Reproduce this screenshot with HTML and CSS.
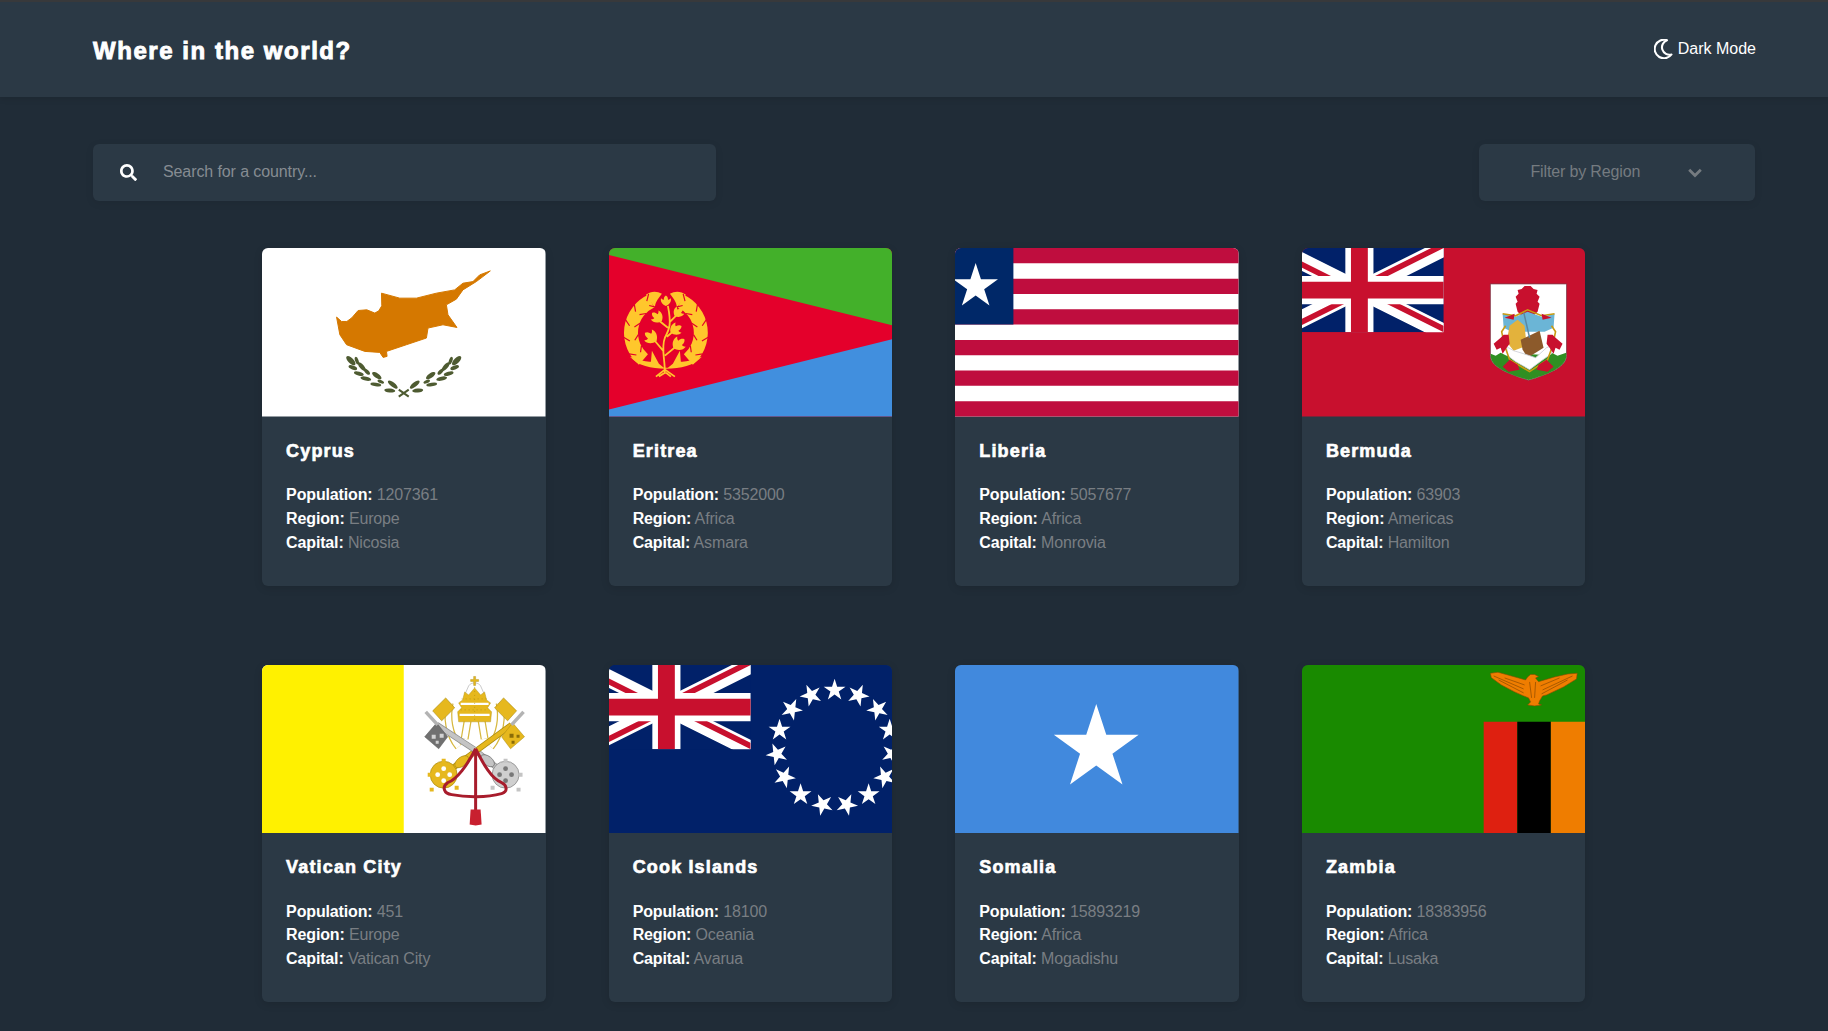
FILE: index.html
```html
<!DOCTYPE html>
<html lang="en">
<head>
  <meta charset="UTF-8" />
  <meta name="viewport" content="width=device-width, initial-scale=1.0"/>
  <title>Where in the world?</title>
  <link rel="stylesheet" href="styles.css">
</head>
<body>
  <svg class="svg-defs" aria-hidden="true">
    <defs>
      <path id="star" d="M0-1 .2245-.309H.951L.363.118.588.809 0 .382-.588.809-.363.118-.951-.309H-.2245Z"/>
      <clipPath id="jack-clip"><path d="M30 15h30v15zv15H0zH0V0zV0h30z"/></clipPath>
      <symbol id="jack" viewBox="0 0 60 30" preserveAspectRatio="none">
        <path d="M0 0h60v30H0z" fill="#012169"/>
        <path d="M0 0 60 30M60 0 0 30" stroke="#fff" stroke-width="6"/>
        <path d="M0 0 60 30M60 0 0 30" stroke="#c8102e" stroke-width="4" clip-path="url(#jack-clip)"/>
        <path d="M30 0v30M0 15h60" stroke="#fff" stroke-width="10"/>
        <path d="M30 0v30M0 15h60" stroke="#c8102e" stroke-width="6"/>
      </symbol>
      <path id="notch" d="M3-7.500-2-2M3 7.500-2 3" fill="none" stroke="#e4002b" stroke-width="1.200"/>
      <path id="bud" d="M0 6C-6 4-8-1-7-5-5-3-4-3-3-3-3-6-2-8 0-9 2-8 3-6 3-3 4-3 5-3 7-5 8-1 6 4 0 6Z"/>
      <g id="wreath-side">
        <path d="M42.200 53.300A35 35 0 0 0 34.500 111.800" fill="none" stroke="#ffc72c" stroke-width="14"/>
        <path d="M37 47C42 43 48 43 53 46 48 52 46 56 46 60Z" fill="#ffc72c"/>
        <use href="#notch" transform="rotate(-28 57 85) translate(57 50)"/>
        <use href="#notch" transform="rotate(-52 57 85) translate(57 50)"/>
        <use href="#notch" transform="rotate(-76 57 85) translate(57 50)"/>
        <use href="#notch" transform="rotate(-100 57 85) translate(57 50)"/>
        <use href="#notch" transform="rotate(-124 57 85) translate(57 50)"/>
      </g>
    </defs>
  </svg>

  <header class="topbar">
    <h1 class="brand">Where in the world?</h1>
    <button class="theme-btn">
      <svg class="moon" viewBox="0 0 19 20"><path fill="none" stroke="#fff" stroke-width="2.100" stroke-linejoin="round" d="M13 1.200A9.300 9.300 0 1 0 17.500 15.500A7.500 7.500 0 0 1 13 1.200Z"/></svg>
      <span>Dark Mode</span>
    </button>
  </header>

  <main class="content">
    <div class="toolbar">
      <label class="search">
        <svg class="search-icon" viewBox="0 0 512 512"><path fill="#fff" d="M505 442.700L405.300 343c-4.500-4.500-10.600-7-17-7H372c27.600-35.300 44-79.700 44-128C416 93.100 322.900 0 208 0S0 93.100 0 208s93.100 208 208 208c48.300 0 92.700-16.400 128-44v16.300c0 6.400 2.500 12.500 7 17l99.700 99.700c9.400 9.400 24.600 9.400 33.900 0l28.300-28.300c9.400-9.400 9.400-24.600.1-34zM208 336c-70.700 0-128-57.200-128-128 0-70.700 57.200-128 128-128 70.700 0 128 57.200 128 128 0 70.700-57.200 128-128 128z"/></svg>
        <input type="text" class="search-input" placeholder="Search for a country...">
      </label>
      <div class="region-filter">
        <span class="region-label">Filter by Region</span>
        <svg class="chevron" viewBox="0 0 14 10"><path d="M1.200 1.800 7 7.600 12.800 1.800" fill="none" stroke="#757b80" stroke-width="2.800"/></svg>
      </div>
    </div>

    <section class="country-grid">
      <article class="card">
        <svg class="flag" viewBox="0 0 284 169" preserveAspectRatio="none">
          <path fill="#fff" d="M0 0h284v169H0z"/>
          <path fill="#d57800" stroke="#d57800" stroke-linejoin="round" d="M228.700 23 218 27 211.300 33.700 201.300 35.300 193 42 174.700 45.300 154.700 50.300 138 50.300 119.700 45.300 120 58 117 63 113 65.300 105 62 96.300 62.700 90 70 85 73.700 79.700 73.700 74.700 69.300 78 87 84.700 97 103 103.700 118 104.700 121.300 109.700 125.300 108.700 124.700 103.700 144.700 97 164.700 90.300 166.300 80.300 181.300 77 195.300 79.700 186.300 67 184.700 57 194.700 51.300 201.300 42 214.700 33.700 221.300 28.700Z"/>
          <g id="laurel" fill="#4e5b31">
            <ellipse cx="89" cy="113" rx="6" ry="2.700" transform="rotate(45 89 113)"/>
            <ellipse cx="95" cy="113" rx="4" ry="1.700" transform="rotate(70 95 113)"/>
            <ellipse cx="91" cy="120" rx="4.500" ry="2" transform="rotate(20 91 120)"/>
            <ellipse cx="100" cy="119" rx="5.500" ry="2.200" transform="rotate(50 100 119)"/>
            <ellipse cx="97" cy="126" rx="5" ry="2" transform="rotate(15 97 126)"/>
            <ellipse cx="105" cy="124" rx="4" ry="1.800" transform="rotate(45 105 124)"/>
            <ellipse cx="104" cy="131" rx="5.500" ry="2" transform="rotate(12 104 131)"/>
            <ellipse cx="115" cy="128" rx="5.500" ry="2.300" transform="rotate(35 115 128)"/>
            <ellipse cx="114" cy="137" rx="5.500" ry="1.800" transform="rotate(8 114 137)"/>
            <ellipse cx="119" cy="134" rx="3.500" ry="1.600" transform="rotate(25 119 134)"/>
            <ellipse cx="128" cy="143" rx="5.500" ry="2" transform="rotate(5 128 143)"/>
            <ellipse cx="131" cy="137" rx="6" ry="2.200" transform="rotate(38 131 137)"/>
          </g>
          <use href="#laurel" transform="translate(284 0) scale(-1 1)"/>
          <path d="M137 149 147 142M137 142 147 149" stroke="#4e5b31" stroke-width="2"/>
        </svg>
        <div class="card-body">
          <h2 class="country-name">Cyprus</h2>
          <p class="fact"><b>Population:</b> 1207361</p>
          <p class="fact"><b>Region:</b> Europe</p>
          <p class="fact"><b>Capital:</b> Nicosia</p>
        </div>
      </article>

      <article class="card">
        <svg class="flag" viewBox="0 0 284 169" preserveAspectRatio="none">
          <path fill="#e4002b" d="M0 0h284v169H0z"/>
          <path fill="#43b02a" d="M0 0H284V77.500L0 7Z"/>
          <path fill="#418fde" d="M0 162 284 91.500V169H0Z"/>
          <use href="#wreath-side"/>
          <use href="#wreath-side" transform="translate(114 0) scale(-1 1)"/>
          <path fill="#ffc72c" d="M21 109C32 113 38 114 42 114L43 103 50 116 55 120H59L64 116 71 103 72 114C76 114 82 113 93 109 85 118 72 121 57 121 42 121 29 118 21 109Z"/>
          <g fill="#ffc72c">
            <use href="#bud" transform="translate(57 54) scale(.7)"/>
            <use href="#bud" transform="translate(49 70) rotate(-50) scale(.85)"/>
            <use href="#bud" transform="translate(69 65) rotate(45) scale(.75)"/>
            <use href="#bud" transform="translate(66 82) rotate(60) scale(.85)"/>
            <use href="#bud" transform="translate(43 90) rotate(-55) scale(.95)"/>
            <use href="#bud" transform="translate(69 97) rotate(50) scale(.95)"/>
          </g>
          <path fill="none" stroke="#ffc72c" stroke-width="1.800" d="M56 126C56 110 52 100 56 90 60 82 63 78 59 58M49 72 59 80M68 67 61 74M65 83 58 89M45 92 55 104M68 98 56 108M47 129 56 122 66 129M50 129 56 125M62 129 57 125"/>
        </svg>
        <div class="card-body">
          <h2 class="country-name">Eritrea</h2>
          <p class="fact"><b>Population:</b> 5352000</p>
          <p class="fact"><b>Region:</b> Africa</p>
          <p class="fact"><b>Capital:</b> Asmara</p>
        </div>
      </article>

      <article class="card">
        <svg class="flag" viewBox="0 0 284 169" preserveAspectRatio="none">
          <path fill="#fff" d="M0 0h284v169H0z"/>
          <path fill="#bf0d3e" d="M0 0h284v15.360H0zM0 30.730h284v15.360H0zM0 61.450h284v15.360H0zM0 92.180h284v15.360H0zM0 122.900h284v15.360H0zM0 153.640h284V169H0z"/>
          <path fill="#002868" d="M0 0h58.500v76.800H0z"/>
          <use href="#star" fill="#fff" transform="translate(20.700 38.600) scale(23.500)"/>
        </svg>
        <div class="card-body">
          <h2 class="country-name">Liberia</h2>
          <p class="fact"><b>Population:</b> 5057677</p>
          <p class="fact"><b>Region:</b> Africa</p>
          <p class="fact"><b>Capital:</b> Monrovia</p>
        </div>
      </article>

      <article class="card">
        <svg class="flag" viewBox="0 0 284 169" preserveAspectRatio="none">
          <path fill="#c8102e" d="M0 0h284v169H0z"/>
          <use href="#jack" x="-27" y="0" width="169" height="84.500"/>
          <path fill="#fff" stroke="#7d3b4a" stroke-width=".8" d="M188.700 36H265V108C265 120 245 127 227 132.700 209 127 188.700 120 188.700 108Z"/>
          <path fill="#2f8f22" d="M189 106 194 108 199 105 205 108 215 106 240 107 250 105 256 108 264.700 105V108C264.700 120 245 127 227 132.400 209 127 189 120 189 108Z"/>
          <path fill="#c8102e" d="M216 64 214 56 216 54 214 49 217 46 216 42 220 41 223 38 229 38 232 41 236 42 235 46 238 49 236 54 238 56 236 64 232 68H220Z"/>
          <path fill="#6bb5d6" d="M201 66 214 69 226 64 240 69 253 66 252 80 243 84H210L202 80Z"/>
          <path fill="#e3b23c" d="M205 94 208 78 216 72 223 78 225 98 212 103Z"/>
          <path fill="#8c5a2b" d="M219 92 238 83 242 100 226 110 221 102Z"/>
          <path fill="none" stroke="#5b88a0" stroke-width="1.500" d="M222 64 228 90"/>
          <path fill="#fff" stroke="#c9ccd4" stroke-width=".8" d="M205 99 212 103 222 106 234 110 245 100 250 98 250 106 240 113 228 122 214 114 206 108Z"/>
          <path fill="none" stroke="#c99a12" stroke-width="1.600" d="M201 66 214 68 226 62 240 68 253 66M204 78 200 84 203 98 208 112 228 124 246 112 251 98 254 84 250 78"/>
          <path fill="#c8102e" d="M199 90 192 96 195 102 199 100 201 106 205 100 208 96 207 87 202 87ZM254 90 261 96 258 102 254 100 252 106 248 100 245 96 246 87 251 87ZM201 119 208 112 216 117 218 122 207 124ZM252 119 245 112 237 117 235 122 246 124ZM203 70 213 66 212 72ZM250 70 240 66 241 72Z"/>
        </svg>
        <div class="card-body">
          <h2 class="country-name">Bermuda</h2>
          <p class="fact"><b>Population:</b> 63903</p>
          <p class="fact"><b>Region:</b> Americas</p>
          <p class="fact"><b>Capital:</b> Hamilton</p>
        </div>
      </article>

      <article class="card">
        <svg class="flag" viewBox="0 0 284 169" preserveAspectRatio="none">
          <path fill="#fff" d="M0 0h284v169H0z"/>
          <path fill="#fff100" d="M0 0h142v169H0z"/>
          <path fill="none" stroke="#d7b840" stroke-width="8" d="M188 38C185 52 187 70 197 82M238 38C241 52 239 70 229 82M206 56 203 74M220 56 223 74"/>
          <path fill="none" stroke="#fff" stroke-width="5.500" d="M188 38C185 52 187 70 197 82M238 38C241 52 239 70 229 82M206 56 203 74M220 56 223 74"/>
          <path fill="#e6b81e" stroke="#a98a10" stroke-width=".6" d="M171 46 184 33 193 43 180 56ZM255 46 242 33 233 43 246 56Z"/>
          <path fill="none" stroke="#bdbdbd" stroke-width=".8" d="M203 30 207 21C209 17 217 17 219 21L223 30"/>
          <path fill="#e6b81e" stroke="#a98a10" stroke-width=".4" d="M212 11.500h2v3h3v2h-3v4h-2v-4h-3v-2h3zM197 57 196 47 200 43 197 38 201 35 203 27 207 30 213 23 219 30 223 27 225 35 229 38 226 43 230 47 229 57Z"/>
          <path fill="none" stroke="#fff" stroke-width="2.400" d="M199 39H227M198 50H228"/>
          <path fill="none" stroke="#a98a10" stroke-width=".6" stroke-dasharray="1 3" d="M200 34H226M199 45H227M213 22V57"/>
          <path fill="none" stroke="#8f8f8f" stroke-width="6" d="M244 110 213 85"/>
          <path fill="none" stroke="#c4c4c4" stroke-width="4.500" d="M244 110 213 85"/>
          <path fill="none" stroke="#a98a10" stroke-width="6" d="M182 110 250 60"/>
          <path fill="none" stroke="#e6b81e" stroke-width="4.500" d="M182 110 250 60"/>
          <path fill="none" stroke="#8f8f8f" stroke-width="6" d="M213 85 175 60"/>
          <path fill="none" stroke="#c4c4c4" stroke-width="4.500" d="M213 85 175 60"/>
          <ellipse cx="200" cy="97" rx="8" ry="4.500" fill="#e6b81e" stroke="#a98a10" stroke-width=".7" transform="rotate(-38 200 97)"/>
          <ellipse cx="226" cy="96" rx="8" ry="4.500" fill="#c4c4c4" stroke="#6b6b6b" stroke-width=".7" transform="rotate(38 226 96)"/>
          <path fill="#707070" stroke="#555" stroke-width=".5" d="M163 72 175 58 186 72 177 84Z"/>
          <path fill="#e6b81e" stroke="#a98a10" stroke-width=".5" d="M263 72 251 58 240 72 249 84Z"/>
          <path fill="#d2d2d2" d="M170 70h4v4h-4zM178 69h4v4h-4zM174 76h3v3h-3z"/>
          <path fill="#8a6c08" d="M248 69h4v4h-4zM255 70h3v3h-3zM250 76h3v3h-3z"/>
          <path fill="none" stroke="#b3b3b3" stroke-width="3.500" d="M164 47 176 60"/>
          <path fill="none" stroke="#b3b3b3" stroke-width="3.500" d="M262 47 250 60"/>
          <circle cx="182" cy="110" r="13.500" fill="#e6b81e" stroke="#a98a10" stroke-width=".7"/>
          <circle cx="244" cy="110" r="13.500" fill="#cfcfcf" stroke="#7f7f7f" stroke-width=".7"/>
          <path fill="#e6b81e" d="M180 94h4v4h-4zM166 108h4v4h-4zM193 121h4v4h-4zM168 123h4v4h-4z"/>
          <path fill="#c4c4c4" d="M242 94h4v4h-4zM257 108h4v4h-4zM229 121h4v4h-4zM255 123h4v4h-4z"/>
          <g fill="#fff"><circle cx="182" cy="104" r="2.400"/><circle cx="176" cy="110" r="2.400"/><circle cx="188" cy="110" r="2.400"/><circle cx="182" cy="116" r="2.400"/></g>
          <g fill="#777"><circle cx="244" cy="104" r="2.400"/><circle cx="238" cy="110" r="2.400"/><circle cx="250" cy="110" r="2.400"/><circle cx="244" cy="116" r="2.400"/></g>
          <path fill="none" stroke="#a81c2c" stroke-width="3" d="M214 84V148M214 84C206 100 195 115 186 118 180 122 182 129 190 130 205 133 225 133 240 129 247 127 245 120 240 118 230 114 222 100 214 84"/>
          <path fill="#c8202f" d="M209 145H219L220 160 214 161 208 160Z"/>
        </svg>
        <div class="card-body">
          <h2 class="country-name">Vatican City</h2>
          <p class="fact"><b>Population:</b> 451</p>
          <p class="fact"><b>Region:</b> Europe</p>
          <p class="fact"><b>Capital:</b> Vatican City</p>
        </div>
      </article>

      <article class="card">
        <svg class="flag" viewBox="0 0 284 169" preserveAspectRatio="none">
          <path fill="#012169" d="M0 0h284v169H0z"/>
          <use href="#jack" x="-27" y="0" width="169" height="84.500"/>
          <g fill="#fff">
            <use href="#star" transform="rotate(0 226 83.300) translate(226 25.300) scale(11.500)"/>
            <use href="#star" transform="rotate(24 226 83.300) translate(226 25.300) scale(11.500)"/>
            <use href="#star" transform="rotate(48 226 83.300) translate(226 25.300) scale(11.500)"/>
            <use href="#star" transform="rotate(72 226 83.300) translate(226 25.300) scale(11.500)"/>
            <use href="#star" transform="rotate(96 226 83.300) translate(226 25.300) scale(11.500)"/>
            <use href="#star" transform="rotate(120 226 83.300) translate(226 25.300) scale(11.500)"/>
            <use href="#star" transform="rotate(144 226 83.300) translate(226 25.300) scale(11.500)"/>
            <use href="#star" transform="rotate(168 226 83.300) translate(226 25.300) scale(11.500)"/>
            <use href="#star" transform="rotate(192 226 83.300) translate(226 25.300) scale(11.500)"/>
            <use href="#star" transform="rotate(216 226 83.300) translate(226 25.300) scale(11.500)"/>
            <use href="#star" transform="rotate(240 226 83.300) translate(226 25.300) scale(11.500)"/>
            <use href="#star" transform="rotate(264 226 83.300) translate(226 25.300) scale(11.500)"/>
            <use href="#star" transform="rotate(288 226 83.300) translate(226 25.300) scale(11.500)"/>
            <use href="#star" transform="rotate(312 226 83.300) translate(226 25.300) scale(11.500)"/>
            <use href="#star" transform="rotate(336 226 83.300) translate(226 25.300) scale(11.500)"/>
          </g>
        </svg>
        <div class="card-body">
          <h2 class="country-name">Cook Islands</h2>
          <p class="fact"><b>Population:</b> 18100</p>
          <p class="fact"><b>Region:</b> Oceania</p>
          <p class="fact"><b>Capital:</b> Avarua</p>
        </div>
      </article>

      <article class="card">
        <svg class="flag" viewBox="0 0 284 169" preserveAspectRatio="none">
          <path fill="#4189dd" d="M0 0h284v169H0z"/>
          <use href="#star" fill="#fff" transform="translate(141.500 83.700) scale(44.700)"/>
        </svg>
        <div class="card-body">
          <h2 class="country-name">Somalia</h2>
          <p class="fact"><b>Population:</b> 15893219</p>
          <p class="fact"><b>Region:</b> Africa</p>
          <p class="fact"><b>Capital:</b> Mogadishu</p>
        </div>
      </article>

      <article class="card">
        <svg class="flag" viewBox="0 0 284 169" preserveAspectRatio="none">
          <path fill="#198a00" d="M0 0h284v169H0z"/>
          <path fill="#de2010" d="M182 57h33.700v112H182z"/>
          <path fill="#000" d="M215.700 57h33.600v112h-33.600z"/>
          <path fill="#ef7d00" d="M249.300 57H284v112h-34.700z"/>
          <path fill="#ef7d00" stroke="#8a4b00" stroke-width=".6" d="M188.700 8.300 196.300 7.300 206.300 10 224 15 226 12 229 9.500 233 9.500 237 11.500 234 13 236 17 253 12 266.300 9 275.700 8.300 275 14 262 22 245 30 241 31 238 36 237 39 240 40 233 41 226 40 229 37 227 33 222 31 213 27 199.700 20 189.700 12.700Z"/>
          <ellipse cx="231" cy="23" rx="7.500" ry="10" fill="#ef7d00"/>
          <path fill="none" stroke="#8a4b00" stroke-width=".7" d="M192 11 222 24M197 15 222 28M203 13 223 20M271 11 241 25M266 15 240 29M258 13 239 21M228 17 230 33M234 17 233 33"/>
        </svg>
        <div class="card-body">
          <h2 class="country-name">Zambia</h2>
          <p class="fact"><b>Population:</b> 18383956</p>
          <p class="fact"><b>Region:</b> Africa</p>
          <p class="fact"><b>Capital:</b> Lusaka</p>
        </div>
      </article>
    </section>
  </main>
</body>
</html>
```

FILE: styles.css
```css
* {
  box-sizing: border-box;
}

body {
  margin: 0;
  background-color: #202c37;
  color: #fff;
  font-family: "Liberation Sans", Arial, sans-serif;
  font-size: 16px;
}

.svg-defs {
  display: block;
  width: 0;
  height: 0;
}

.topbar {
  display: flex;
  align-items: center;
  justify-content: space-between;
  height: 97px;
  padding: 0 72px 2px 93px;
  background-color: #2b3945;
  border-top: 2px solid #38393b;
  box-shadow: 0 2px 6px rgba(0, 0, 0, 0.1);
}

.brand {
  margin: 0;
  padding-top: 4px;
  font-size: 24px;
  font-weight: 700;
  letter-spacing: 1.55px;
  -webkit-text-stroke: 0.9px #fff;
}

.theme-btn {
  display: flex;
  align-items: center;
  gap: 5px;
  padding: 0;
  background: none;
  border: none;
  color: #fff;
  font: inherit;
}

.moon {
  width: 19px;
  height: 20px;
}

.content {
  padding: 47px 73.5px 29px 93px;
}

.toolbar {
  display: flex;
  justify-content: space-between;
  margin-bottom: 47px;
}

.search {
  display: flex;
  align-items: center;
  gap: 26px;
  width: 623px;
  height: 57px;
  padding-left: 27px;
  background-color: #2b3945;
  border-radius: 6px;
  box-shadow: 0 2px 8px rgba(0, 0, 0, 0.08);
}

.search-icon {
  width: 17px;
  height: 17px;
  flex: none;
}

.search-input {
  flex: 1;
  padding: 0 0 2px;
  background: none;
  border: none;
  color: #fff;
  font: inherit;
  letter-spacing: -0.1px;
}

.search-input::placeholder {
  color: #868c92;
  opacity: 1;
}

.region-filter {
  display: flex;
  align-items: center;
  gap: 48px;
  width: 276px;
  height: 57px;
  padding-left: 52px;
  background-color: #2b3945;
  border-radius: 6px;
  box-shadow: 0 2px 8px rgba(0, 0, 0, 0.08);
  color: #757b80;
}

.region-label {
  margin-bottom: 1px;
  letter-spacing: -0.15px;
}

.chevron {
  width: 14px;
  height: 10px;
}

.country-grid {
  display: grid;
  grid-template-columns: repeat(4, 283.5px);
  gap: 79px 63.1px;
  justify-content: center;
}

.card {
  height: 337.5px;
  overflow: hidden;
  background-color: #2b3945;
  border-radius: 6px;
  box-shadow: 0 2px 8px rgba(0, 0, 0, 0.12);
}

.flag {
  display: block;
  width: 100%;
  height: 168.5px;
}

.card-body {
  padding: 24px;
}

.country-name {
  margin: 0 0 21.9px;
  font-size: 18px;
  line-height: 21px;
  letter-spacing: 1.15px;
  -webkit-text-stroke: 0.65px #fff;
}

.fact {
  margin: 0;
  color: #797e83;
  line-height: 23.6px;
  letter-spacing: -0.15px;
}

.fact b {
  color: #fff;
}
```
